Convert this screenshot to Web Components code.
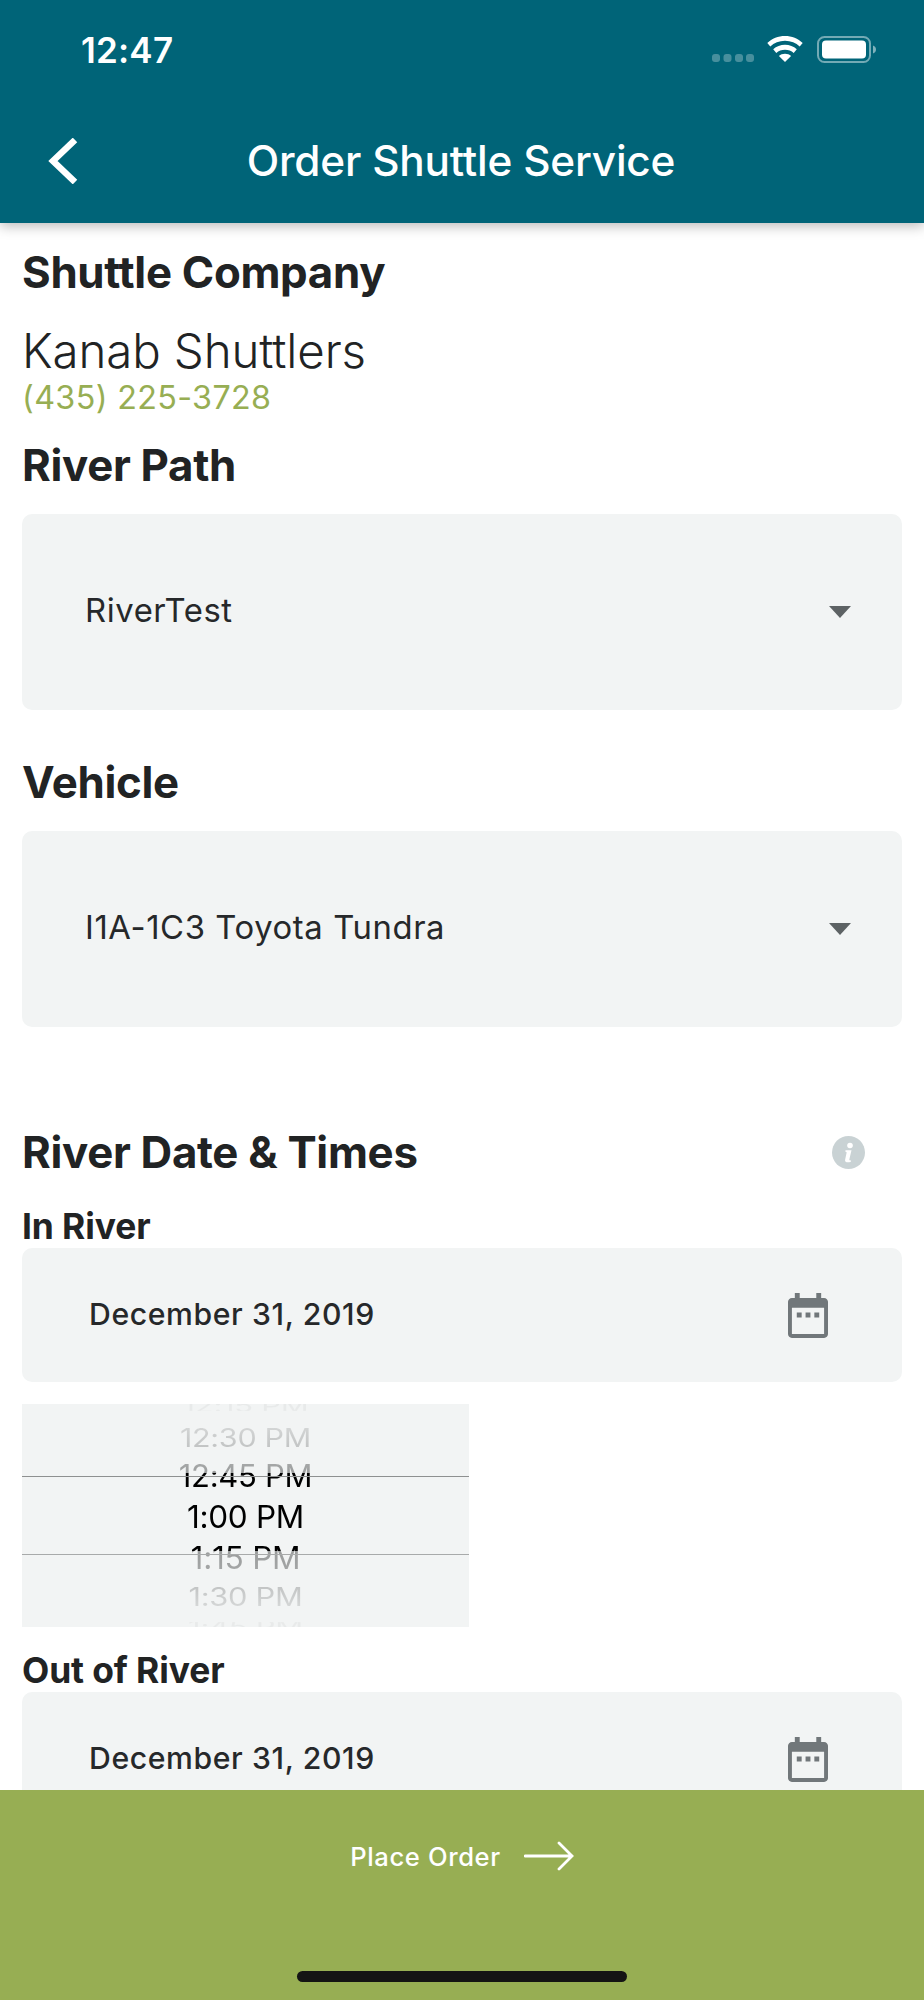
<!DOCTYPE html>
<html lang="en"><head><meta charset="utf-8"><title>Order Shuttle Service</title>
<style>
html,body{margin:0;padding:0;background:#fff}
body{font-family:Inter,"Liberation Sans",sans-serif;color:#212324}
</style></head><body>
<app-screen>
  <nav-header title="Order Shuttle Service"></nav-header>
  <section-title style="margin-top:24px">Shuttle Company</section-title>
  <company-info name="Kanab Shuttlers" phone="(435) 225-3728"></company-info>
  <section-title style="margin-top:22px">River Path</section-title>
  <select-field style="margin-top:24px" value="RiverTest"></select-field>
  <section-title style="margin-top:47px">Vehicle</section-title>
  <select-field style="margin-top:24px" value="I1A-1C3 Toyota Tundra"></select-field>
  <section-title style="margin-top:100px" info>River Date &amp; Times</section-title>
  <field-label style="margin-top:30px">In River</field-label>
  <date-field style="margin-top:1px" value="December 31, 2019"></date-field>
  <time-wheel style="margin-top:22px"></time-wheel>
  <field-label style="margin-top:24px">Out of River</field-label>
  <date-field style="margin-top:1px" value="December 31, 2019"></date-field>
  <order-bar slot="bar"></order-bar>
</app-screen>
<script>
function def(name, html){
  customElements.define(name, class extends HTMLElement{
    connectedCallback(){
      if(this.shadowRoot) return;
      const s=this.attachShadow({mode:'open'});
      s.innerHTML=typeof html==='function'?html(this):html;
    }
  });
}
def('app-screen',`<style>
:host{display:block;position:relative;width:924px;height:2000px;overflow:hidden;background:#fff}
.main{display:flex;flex-direction:column;padding:0 22px}
::slotted(nav-header){margin:0 -22px}
</style><div class="main"><slot></slot></div><slot name="bar"></slot>`);
def('nav-header',h=>`<style>
:host{display:block;height:223px;background:#006478;color:#fff;box-shadow:0 3px 12px rgba(0,0,0,.28);position:relative;z-index:1}
.status{height:100px;display:flex;align-items:center;padding:0 48px 0 81px;box-sizing:border-box;justify-content:space-between}
.time{font-size:35px;font-weight:600;line-height:100px;letter-spacing:.2px}
.icons{display:block}
.nav{height:123px;display:grid;grid-template-columns:49px 1fr 49px;align-items:center}
.nav svg{margin-left:47px;margin-top:-2px;display:block}
h1{margin:0;font-size:42.300px;font-weight:500;text-align:center;line-height:50px;grid-column:1/4;grid-row:1;margin:-2px 2px 0 0;letter-spacing:-.2px}
.back{grid-column:1;grid-row:1;z-index:1}
</style>
<div class="status"><span class="time">12:47</span>
<svg class="icons" width="164" height="30" viewBox="0 0 164 30">
  <g fill="#fff" opacity=".28"><rect x="0" y="19" width="8" height="8" rx="3"/><rect x="11.500" y="19" width="8" height="8" rx="3"/><rect x="23" y="19" width="8" height="8" rx="3"/><rect x="34" y="19" width="8" height="8" rx="3"/></g>
  <g fill="#fff"><path d="M73 1c-6.800 0-13 2.600-17.700 7l3 3.500C62 7.900 67.200 5.800 73 5.800s11 2.100 14.700 5.700l3-3.500C86 3.600 79.800 1 73 1z"/><path d="M73 9.800c-4.500 0-8.600 1.700-11.800 4.500l3.100 3.600c2.300-2 5.300-3.200 8.700-3.200s6.400 1.200 8.700 3.200l3.100-3.600C81.600 11.500 77.500 9.800 73 9.800z"/><path d="M73 18.700c-2.400 0-4.500.9-6.100 2.300L73 27l6.100-6c-1.600-1.400-3.700-2.300-6.100-2.300z"/></g>
  <rect x="106" y="2" width="52" height="25" rx="6.500" fill="none" stroke="#fff" stroke-opacity=".45" stroke-width="2"/>
  <rect x="110" y="5.500" width="44" height="18" rx="4" fill="#fff"/>
  <path d="M161 10.500c2 .7 3 2.200 3 4s-1 3.300-3 4z" fill="#fff" fill-opacity=".5"/>
</svg></div>
<div class="nav"><svg class="back" width="31" height="46" viewBox="0 0 31 46"><path d="M28 2 6 23l22 21" fill="none" stroke="#fff" stroke-width="6.500"/></svg>
<h1>${h.getAttribute('title')}</h1></div>`);
def('section-title',h=>`<style>
:host{display:block}
.r{display:flex;justify-content:space-between;align-items:center;font-size:43.800px;font-weight:700;line-height:50px;letter-spacing:-.3px;color:#212324}
.r span{padding-top:1px;margin-bottom:-1px}
svg{margin-right:37px}
</style><div class="r"><span><slot></slot></span>${h.hasAttribute('info')?`<svg width="33" height="33" viewBox="0 0 33 33"><circle cx="16.500" cy="16.500" r="16.500" fill="#c9d2d4"/><circle cx="18" cy="9.500" r="2.800" fill="#fff"/><path d="M13.500 14.300h6l-2.200 9.300c-.2.800.5 1 1.800.6l-.3 1.600c-2.800 1-6.300.8-5.700-2.100l1.500-6.900c.1-.8-.4-1-1.300-1z" fill="#fff"/></svg>`:''}</div>`);
def('company-info',h=>`<style>
:host{display:block;margin-top:29px}
.n{font-size:47.400px;font-weight:300;line-height:50px;color:#212324;letter-spacing:-.1px}
.p{font-size:32.300px;line-height:40px;color:#97ae53;margin-top:2px;letter-spacing:.35px}
</style><div class="n">${h.getAttribute('name')}</div><div class="p">${h.getAttribute('phone')}</div>`);
def('select-field',h=>`<style>
:host{display:block}
.f{height:196px;background:#f2f4f4;border-radius:10px;display:flex;align-items:center;justify-content:space-between;padding:0 51px 0 63px;font-size:32.800px;letter-spacing:.6px;color:#26282a}
.f span:first-child{position:relative;top:-2px}
.a{width:0;height:0;border-left:11.500px solid transparent;border-right:11.500px solid transparent;border-top:12px solid #5d6264}
</style><div class="f"><span>${h.getAttribute('value')}</span><span class="a"></span></div>`);
def('field-label',`<style>
:host{display:block;font-size:35.400px;font-weight:700;line-height:40px;color:#212324;letter-spacing:-.1px}
</style><slot></slot>`);
def('date-field',h=>`<style>
:host{display:block}
.f{height:134px;background:#f2f4f4;border-radius:10px;display:flex;align-items:center;justify-content:space-between;padding:0 74px 0 67px;font-size:30.200px;letter-spacing:.6px;color:#26282a;font-weight:500}
.f span{position:relative;top:-1px}
svg{display:block}
</style><div class="f"><span>${h.getAttribute('value')}</span>
<svg width="40" height="45" viewBox="0 0 41 46"><path fill="#71777a" fill-rule="evenodd" d="M7 0h5v5h17V0h5v5h3c2.200 0 4 1.800 4 4v33c0 2.200-1.800 4-4 4H4c-2.200 0-4-1.800-4-4V9c0-2.200 1.800-4 4-4h3zM4 15v27h33V15z"/><path fill="#71777a" d="M9 20h5v5H9zM18 20h5v5h-5zM27 20h5v5h-5z"/></svg></div>`);
def('time-wheel',`<style>
:host{display:block;width:447px;height:223px;background:#f2f4f4;overflow:hidden;position:relative}
.list{height:223px;display:flex;flex-direction:column;align-items:center;font-size:31px;letter-spacing:-.3px}
.i{flex:none;white-space:nowrap;-webkit-background-clip:text;background-clip:text;color:transparent}
.a{height:18px;line-height:18px;transform:scaleY(.55);background-image:linear-gradient(#e8eaea,#e8eaea)}
.b{height:37px;line-height:37px;transform:scaleY(.82);background-image:linear-gradient(#d8dada,#bdbfbf)}
.b2{background-image:linear-gradient(#bdbfbf,#dadcdc)}
.t{height:40px;line-height:40px;background-image:linear-gradient(#b0b2b2 0,#9a9c9c 17px,#000 17px)}
.m{height:42px;line-height:42px;font-size:31.500px;background-image:linear-gradient(#000,#000)}
.u{height:40px;line-height:40px;font-size:31.700px;background-image:linear-gradient(#000 13px,#9a9c9c 13px,#a8aaaa 100%)}
.l{position:absolute;left:0;right:0;height:1px;background:#8e9090}
</style>
<div class="list">
<div class="i a" style="margin-top:-7px;margin-bottom:4px">12:15 PM</div>
<div class="i b" style="font-size:30.500px">12:30 PM</div>
<div class="i t">12:45 PM</div>
<div class="i m">1:00 PM</div>
<div class="i u">1:15 PM</div>
<div class="i b b2" style="font-size:30.800px">1:30 PM</div>
<div class="i a" style="margin-top:3px">1:45 PM</div>
</div>
<div class="l" style="top:72px"></div><div class="l" style="top:150px;background:#a8aaaa"></div>`);
def('order-bar',`<style>
:host{display:block;position:absolute;left:0;right:0;bottom:0;height:210px;background:#97ae53;color:#fff}
.c{height:132px;display:flex;align-items:center;justify-content:center;gap:23px;font-size:25.600px;font-weight:500;letter-spacing:.6px}
.h{position:absolute;left:297px;top:181px;width:330px;height:11px;border-radius:6px;background:#141414}
svg{display:block}
</style><div class="c"><span>Place Order</span><svg width="50" height="30" viewBox="0 0 50 30"><path d="M1 15h47M35 2l13 13-13 13" fill="none" stroke="#fff" stroke-width="2.800" stroke-linecap="round"/></svg></div><div class="h"></div>`);
</script>
</body></html>
